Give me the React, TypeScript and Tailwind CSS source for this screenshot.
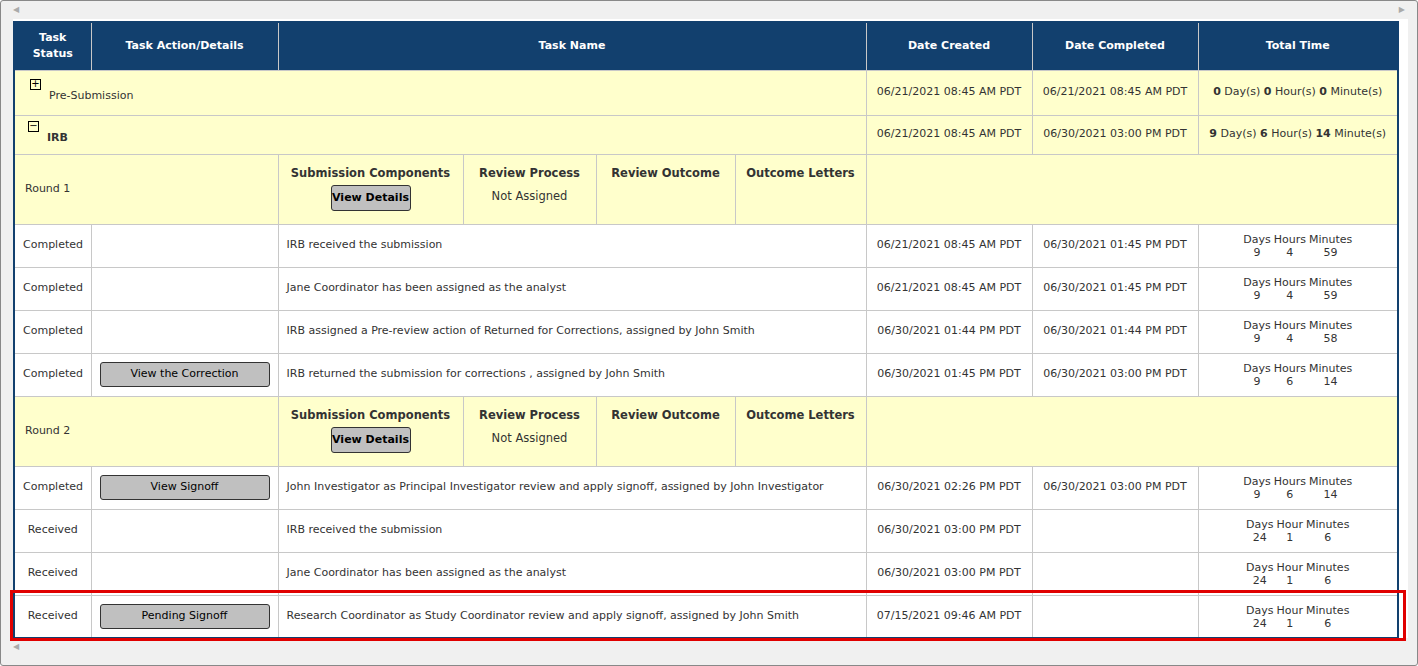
import React from "react";

const F = { fontFamily: '"DejaVu Sans", Verdana, sans-serif' };
const cell = "border border-[#c8c8c8] px-2 text-[11px] text-[#333]";
const btn =
  "bg-[#c0c0c0] border border-[#333] rounded-[3px] text-[11px] text-black font-['Liberation_Sans',Arial,sans-serif]";

function Time({ d, h, m, hour }: { d: string; h: string; m: string; hour?: boolean }) {
  return (
    <div className="inline-grid grid-cols-[auto_auto_auto] gap-x-[3px] leading-[13px] text-center">
      <span>Days</span>
      <span>{hour ? "Hour" : "Hours"}</span>
      <span>Minutes</span>
      <span>{d}</span>
      <span>{h}</span>
      <span>{m}</span>
    </div>
  );
}

type Row = { s: string; b?: string; n: string; c: string; dc: string; t: [string, string, string]; hour?: boolean };

function TaskRow({ r }: { r: Row }) {
  return (
    <tr className="h-[43px] bg-white">
      <td className={cell + " text-center"}>{r.s}</td>
      <td className={cell + " text-center"}>
        {r.b && <button className={btn + " w-[170px] h-[25px]"}>{r.b}</button>}
      </td>
      <td className={cell}>{r.n}</td>
      <td className={cell + " text-center"}>{r.c}</td>
      <td className={cell + " text-center"}>{r.dc}</td>
      <td className={cell + " text-center"}>
        <Time d={r.t[0]} h={r.t[1]} m={r.t[2]} hour={r.hour} />
      </td>
    </tr>
  );
}

function RoundRow({ n }: { n: string }) {
  const h = "font-bold text-[11.5px] pt-[10px]";
  return (
    <tr className="h-[70px] bg-[#ffffcc]">
      <td colSpan={2} className={cell + " pl-[10px]"}>{n}</td>
      <td className="border border-[#c8c8c8] p-0 align-top" colSpan={1}>
        <div className="grid grid-cols-[184px_133px_139px_1fr] h-[69px] text-[11px] text-[#333] text-center">
          <div className={h}>
            <div>Submission Components</div>
            <button className={btn + " w-[80px] h-[26px] mt-[3px]"}>View Details</button>
          </div>
          <div className={h + " border-l border-[#c8c8c8]"}>
            <div>Review Process</div>
            <div className="font-normal mt-[6px]">Not Assigned</div>
          </div>
          <div className={h + " border-l border-[#c8c8c8]"}>Review Outcome</div>
          <div className={h + " border-l border-[#c8c8c8]"}>Outcome Letters</div>
        </div>
      </td>
      <td colSpan={3} className={cell}></td>
    </tr>
  );
}

const r1: Row[] = [
  { s: "Completed", n: "IRB received the submission", c: "06/21/2021 08:45 AM PDT", dc: "06/30/2021 01:45 PM PDT", t: ["9", "4", "59"] },
  { s: "Completed", n: "Jane Coordinator has been assigned as the analyst", c: "06/21/2021 08:45 AM PDT", dc: "06/30/2021 01:45 PM PDT", t: ["9", "4", "59"] },
  { s: "Completed", n: "IRB assigned a Pre-review action of Returned for Corrections, assigned by John Smith", c: "06/30/2021 01:44 PM PDT", dc: "06/30/2021 01:44 PM PDT", t: ["9", "4", "58"] },
  { s: "Completed", b: "View the Correction", n: "IRB returned the submission for corrections , assigned by John Smith", c: "06/30/2021 01:45 PM PDT", dc: "06/30/2021 03:00 PM PDT", t: ["9", "6", "14"] },
];
const r2: Row[] = [
  { s: "Completed", b: "View Signoff", n: "John Investigator as Principal Investigator review and apply signoff, assigned by John Investigator", c: "06/30/2021 02:26 PM PDT", dc: "06/30/2021 03:00 PM PDT", t: ["9", "6", "14"] },
  { s: "Received", n: "IRB received the submission", c: "06/30/2021 03:00 PM PDT", dc: "", t: ["24", "1", "6"], hour: true },
  { s: "Received", n: "Jane Coordinator has been assigned as the analyst", c: "06/30/2021 03:00 PM PDT", dc: "", t: ["24", "1", "6"], hour: true },
  { s: "Received", b: "Pending Signoff", n: "Research Coordinator as Study Coordinator review and apply signoff, assigned by John Smith", c: "07/15/2021 09:46 AM PDT", dc: "", t: ["24", "1", "6"], hour: true },
];

export default function App() {
  const th = "border-l border-[#c8c8c8] first:border-l-0 font-bold text-[11px] text-white text-center";
  return (
    <div style={F} className="w-[1418px] h-[666px] bg-[#f0f0f0] border border-[#888] rounded-[3px] relative overflow-hidden">
      <div className="h-[18px] flex items-center justify-between px-[12px] text-[8px] text-[#aaa]">
        <span>◀</span>
        <span>▶</span>
      </div>
      <div className="ml-[12px] mr-[9px] bg-white h-[619px] pt-[2px]">
        <table className="table-fixed border-collapse w-[1386px] border-[2px] border-[#12406e]">
          <colgroup>
            <col className="w-[77px]" />
            <col className="w-[187px]" />
            <col className="w-[588px]" />
            <col className="w-[166px]" />
            <col className="w-[166px]" />
            <col />
          </colgroup>
          <thead>
            <tr className="h-[48px] bg-[#12406e]">
              <th className={th}>Task<br />Status</th>
              <th className={th}>Task Action/Details</th>
              <th className={th}>Task Name</th>
              <th className={th}>Date Created</th>
              <th className={th}>Date Completed</th>
              <th className={th}>Total Time</th>
            </tr>
          </thead>
          <tbody>
            <tr className="h-[45px] bg-[#ffffcc]">
              <td colSpan={3} className={cell + " pl-[15px]"}>
                <div className="flex items-start gap-[8px]">
                  <span className="w-[11px] h-[11px] border border-black text-[10px] leading-[8px] text-center text-black mt-[-2px]">+</span>
                  <span className="mt-[7px]">Pre-Submission</span>
                </div>
              </td>
              <td className={cell + " text-center"}>06/21/2021 08:45 AM PDT</td>
              <td className={cell + " text-center"}>06/21/2021 08:45 AM PDT</td>
              <td className={cell + " text-center"}>
                <b>0</b> Day(s) <b>0</b> Hour(s) <b>0</b> Minute(s)
              </td>
            </tr>
            <tr className="h-[39px] bg-[#ffffcc]">
              <td colSpan={3} className={cell + " pl-[13px]"}>
                <div className="flex items-start gap-[8px]">
                  <span className="w-[11px] h-[11px] border border-black text-[10px] leading-[8px] text-center text-black mt-[-2px]">−</span>
                  <span className="mt-[7px] font-bold">IRB</span>
                </div>
              </td>
              <td className={cell + " text-center"}>06/21/2021 08:45 AM PDT</td>
              <td className={cell + " text-center"}>06/30/2021 03:00 PM PDT</td>
              <td className={cell + " text-center"}>
                <b>9</b> Day(s) <b>6</b> Hour(s) <b>14</b> Minute(s)
              </td>
            </tr>
            <RoundRow n="Round 1" />
            {r1.map((r, i) => <TaskRow key={i} r={r} />)}
            <RoundRow n="Round 2" />
            {r2.map((r, i) => <TaskRow key={i} r={r} />)}
          </tbody>
        </table>
      </div>
      <div className="h-[18px] flex items-center px-[12px] text-[8px] text-[#aaa]">
        <span>◀</span>
      </div>
      <div className="absolute left-[9px] top-[589px] w-[1396px] h-[51px] border-[3px] border-[#e00000] pointer-events-none" />
    </div>
  );
}
